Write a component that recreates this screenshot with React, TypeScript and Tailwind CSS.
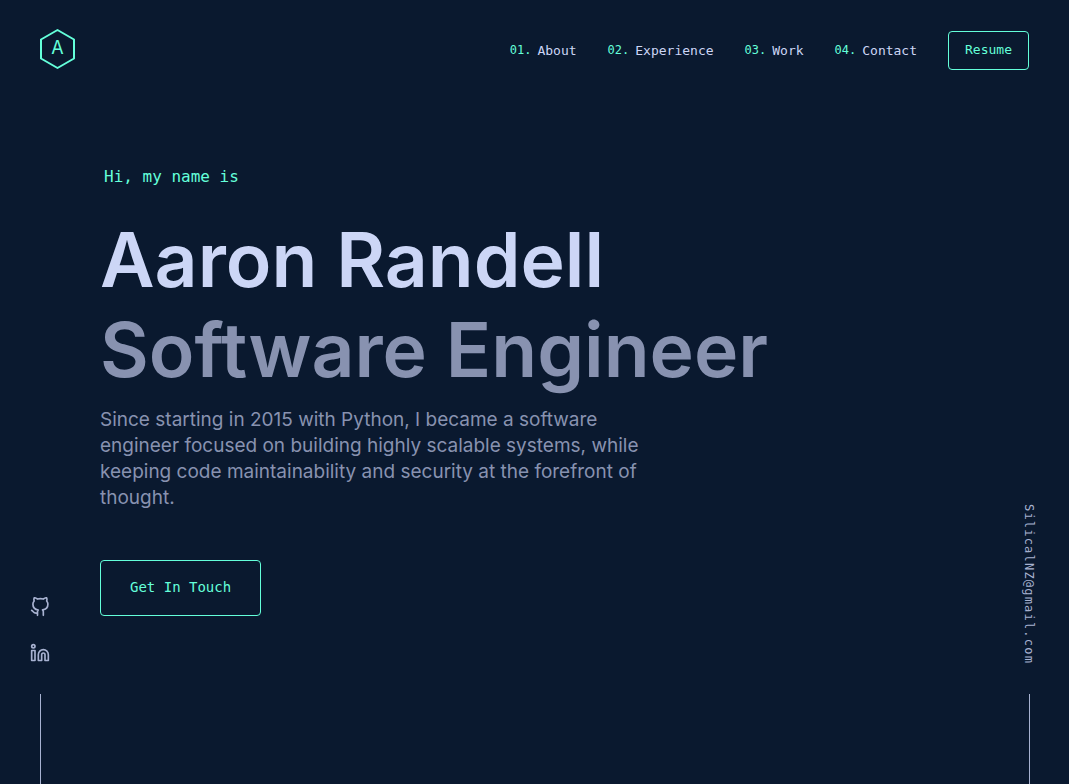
import React from 'react';

const links = [
  { number: '01.', label: 'About', href: '#about' },
  { number: '02.', label: 'Experience', href: '#experience' },
  { number: '03.', label: 'Work', href: '#work' },
  { number: '04.', label: 'Contact', href: '#contact' },
];

function Logo() {
  return (
    <a href="#top" aria-label="Home" className="text-[#64ffda]">
      <svg width="36" height="42" viewBox="0 0 36 42" fill="none" stroke="currentColor" strokeWidth="2" strokeLinejoin="round">
        <path d="M17.500 2 34 11.500V30.500L17.500 40 1 30.500V11.500Z" />
        <text x="17.500" y="26" textAnchor="middle" fill="currentColor" stroke="none" fontSize="18" fontFamily="Inter, sans-serif">A</text>
      </svg>
    </a>
  );
}

function GitHubIcon() {
  return (
    <svg width="20" height="20" viewBox="0 0 24 24" fill="none" stroke="currentColor" strokeWidth="2" strokeLinecap="round" strokeLinejoin="round">
      <path d="M9 19c-5 1.500-5-2.500-7-3m14 6v-3.870a3.370 3.370 0 0 0-.94-2.610c3.140-.35 6.440-1.540 6.440-7A5.440 5.440 0 0 0 20 4.770 5.070 5.070 0 0 0 19.910 1S18.730.65 16 2.480a13.380 13.380 0 0 0-7 0C6.270.65 5.090 1 5.090 1A5.070 5.070 0 0 0 5 4.770a5.440 5.440 0 0 0-1.500 3.780c0 5.420 3.300 6.610 6.440 7A3.370 3.370 0 0 0 9 18.130V22" />
    </svg>
  );
}

function LinkedInIcon() {
  return (
    <svg width="20" height="20" viewBox="0 0 24 24" fill="none" stroke="currentColor" strokeWidth="2" strokeLinecap="round" strokeLinejoin="round">
      <path d="M16 8a6 6 0 0 1 6 6v7h-4v-7a2 2 0 0 0-4 0v7h-4v-7a6 6 0 0 1 6-6z" />
      <rect x="2" y="9" width="4" height="12" />
      <circle cx="4" cy="4" r="2" />
    </svg>
  );
}

export default function App() {
  return (
    <div className="flex min-h-screen flex-col bg-[#0a192f] font-['Inter',sans-serif] text-[#8892b0]">
      <header className="flex items-end justify-between px-10 pt-7">
        <Logo />
        <nav className="flex items-center gap-[31px] font-['DejaVu_Sans_Mono',monospace] text-[13px] leading-[21px] text-[#ccd6f6]">
          {links.map((l) => (
            <a key={l.label} href={l.href} className="flex items-center gap-1.5">
              <span className="text-xs leading-[21px] text-[#64ffda]">{l.number}</span>
              {l.label}
            </a>
          ))}
          <a href="#resume" className="rounded border border-[#64ffda] px-4 pb-[9px] pt-[7px] text-[#64ffda]">Resume</a>
        </nav>
      </header>
      <div className="flex flex-1 justify-between">
        <aside className="flex w-20 flex-col items-center justify-end gap-[31px] text-[#a8b2d1]">
          <div className="flex flex-col gap-[26px]">
            <a href="#github" aria-label="GitHub"><GitHubIcon /></a>
            <a href="#linkedin" aria-label="LinkedIn"><LinkedInIcon /></a>
          </div>
          <div className="h-[90px] w-px bg-[#a8b2d1]" />
        </aside>
        <main className="flex-1 pl-5 pt-[95px]">
          <p className="pl-1 font-['DejaVu_Sans_Mono',monospace] text-base text-[#64ffda]">Hi, my name is</p>
          <div className="mt-[26px] text-[75px] font-semibold leading-[90px]">
            <h1 className="text-[#ccd6f6]">Aaron Randell</h1>
            <h2>Software Engineer</h2>
          </div>
          <p className="mt-3 max-w-[540px] text-[19px] leading-[26px]">Since starting in 2015 with Python, I became a software engineer focused on building highly scalable systems, while keeping code maintainability and security at the forefront of thought.</p>
          <a href="#contact" className="mt-[49px] inline-block rounded border border-[#64ffda] px-[29px] pb-[19px] pt-[17px] font-['DejaVu_Sans_Mono',monospace] text-sm leading-[18px] text-[#64ffda]">Get In Touch</a>
        </main>
        <aside className="flex w-20 flex-col items-center justify-end gap-[30px] text-[#a8b2d1]">
          <a href="mailto:SilicalNZ@gmail.com" className="font-['DejaVu_Sans_Mono',monospace] text-xs tracking-widest [writing-mode:vertical-rl]">SilicalNZ@gmail.com</a>
          <div className="h-[90px] w-px bg-[#a8b2d1]" />
        </aside>
      </div>
    </div>
  );
}
